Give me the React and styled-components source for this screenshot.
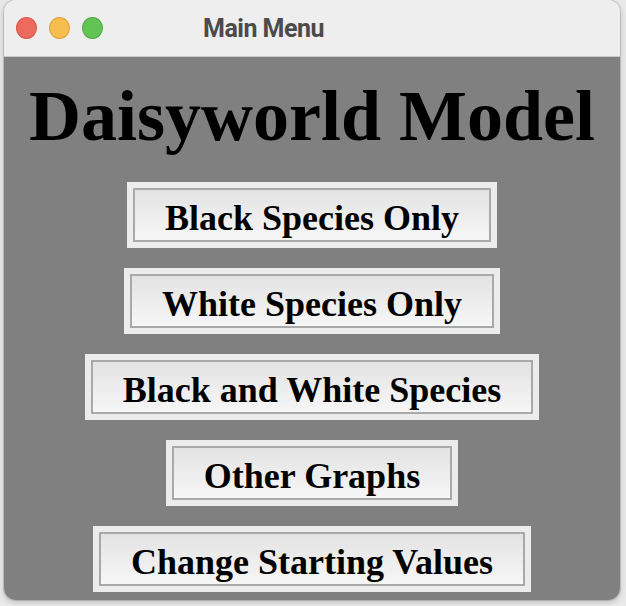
import React from 'react';
import styled, { createGlobalStyle } from 'styled-components';

const GlobalStyle = createGlobalStyle`
  html, body {
    margin: 0;
    padding: 0;
    background: #e9e9e9;
  }
  body {
    width: 626px;
    height: 606px;
    overflow: hidden;
  }
`;

const Desktop = styled.div`
  padding: 0 6px 6px 4px;
  width: 626px;
  height: 606px;
  box-sizing: border-box;
`;

const Window = styled.div`
  display: flex;
  flex-direction: column;
  height: 600px;
  border-radius: 12px;
  overflow: hidden;
  box-shadow: 0 0 0 1px rgba(0, 0, 0, 0.12), 0 2px 6px rgba(0, 0, 0, 0.2);
`;

const TitleBar = styled.div`
  display: flex;
  align-items: center;
  height: 56px;
  flex-shrink: 0;
  padding-left: 12px;
  background: #efeeef;
  border-bottom: 1px solid #c9c9c9;
`;

const Lights = styled.div`
  display: flex;
  gap: 12px;
`;

const Light = styled.span`
  width: 21px;
  height: 22px;
  border-radius: 50%;
  box-sizing: border-box;
  background: ${p => p.color};
  border: 1px solid ${p => p.edge};
`;

const WindowTitle = styled.div`
  margin-left: 100px;
  font-family: Roboto, "Liberation Sans", sans-serif;
  font-weight: 700;
  font-size: 25px;
  color: #4b4b4b;
  letter-spacing: -0.5px;
`;

const Content = styled.div`
  flex: 1;
  display: flex;
  flex-direction: column;
  align-items: center;
  padding-top: 19px;
  background: #808080;
`;

const Heading = styled.h1`
  margin: 0 0 26px;
  font-family: "Liberation Serif", "Times New Roman", serif;
  font-weight: 700;
  font-size: 72px;
  line-height: 80px;
  color: #000;
`;

const Buttons = styled.div`
  display: flex;
  flex-direction: column;
  align-items: center;
  gap: 20px;
`;

const MenuButton = styled.button`
  display: block;
  padding: 0;
  border: 6px solid #ececec;
  background: #ececec;
  cursor: pointer;
`;

const Face = styled.span`
  display: block;
  height: 44px;
  padding: 6px 30px 0;
  border: 2px solid #a9a9a9;
  background: linear-gradient(#e3e3e3, #f6f6f6);
  font-family: "Liberation Serif", "Times New Roman", serif;
  font-weight: 700;
  font-size: 36px;
  line-height: 44px;
  color: #000;
  white-space: nowrap;
`;

const items = [
  'Black Species Only',
  'White Species Only',
  'Black and White Species',
  'Other Graphs',
  'Change Starting Values',
];

export default function App() {
  return (
    <Desktop>
      <GlobalStyle />
      <Window>
        <TitleBar>
          <Lights>
            <Light color="#ee6a5f" edge="#d8554b" />
            <Light color="#f5be4f" edge="#dea33a" />
            <Light color="#61c454" edge="#4eaa42" />
          </Lights>
          <WindowTitle>Main Menu</WindowTitle>
        </TitleBar>
        <Content>
          <Heading>Daisyworld Model</Heading>
          <Buttons>
            {items.map(label => (
              <MenuButton key={label}>
                <Face>{label}</Face>
              </MenuButton>
            ))}
          </Buttons>
        </Content>
      </Window>
    </Desktop>
  );
}
